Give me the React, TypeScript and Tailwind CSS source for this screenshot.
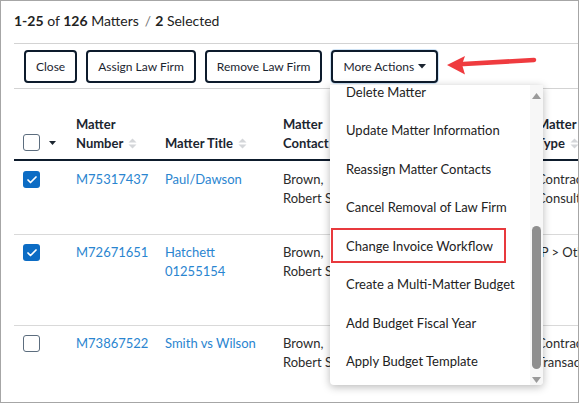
import { Check } from 'lucide-react';

type Matter = {
  number: string;
  title: string[];
  contact: string[];
  status: string;
  type: string[];
  checked: boolean;
  rowClass: string;
};

const matters: Matter[] = [
  {
    number: 'M75317437',
    title: ['Paul/Dawson'],
    contact: ['Brown,', 'Robert Smith'],
    status: 'Open',
    type: ['Contract >', 'Consulting'],
    checked: true,
    rowClass: 'h-[74px] pt-[9px]',
  },
  {
    number: 'M72671651',
    title: ['Hatchett', '01255154'],
    contact: ['Brown,', 'Robert Smith'],
    status: 'Open',
    type: ['IP > Other'],
    checked: true,
    rowClass: 'h-[91px] pt-[8px]',
  },
  {
    number: 'M73867522',
    title: ['Smith vs Wilson'],
    contact: ['Brown,', 'Robert Smith'],
    status: 'Open',
    type: ['Contract >', 'Transaction'],
    checked: false,
    rowClass: 'h-[80px] pt-[8px]',
  },
];

const moreActions = [
  'Delete Matter',
  'Update Matter Information',
  'Reassign Matter Contacts',
  'Cancel Removal of Law Firm',
  'Change Invoice Workflow',
  'Create a Multi-Matter Budget',
  'Add Budget Fiscal Year',
  'Apply Budget Template',
];

const toolbarButtons = ['Close', 'Assign Law Firm', 'Remove Law Firm'];

function SortIcon() {
  return (
    <svg width="9" height="11" viewBox="0 0 9 11" className="ml-[5px] inline-block align-[-1px]">
      <path d="M4.5 0.5 L8.5 4.5 H0.5 Z" fill="#d4d6d9" />
      <path d="M4.5 10.5 L8.5 6.5 H0.5 Z" fill="#d4d6d9" />
    </svg>
  );
}

function Checkbox({ checked }: { checked: boolean }) {
  return checked ? (
    <span className="w-[17px] h-[17px] rounded-[3px] bg-[#0c6cc4] flex items-center justify-center">
      <Check size={12} strokeWidth={3.5} color="#ffffff" />
    </span>
  ) : (
    <span className="block w-[17px] h-[17px] rounded-[3px] border-[1.5px] border-[#5c6d7e] bg-white" />
  );
}

export default function App() {
  return (
    <div
      className="relative w-[579px] h-[403px] overflow-hidden bg-white border border-[#a6a6a6] text-[#222222]"
      style={{ fontFamily: 'Lato, "Noto Sans", sans-serif' }}
    >
      <div className="pl-[13px]">
        {/* summary */}
        <div className="h-[43px] pt-[10px] leading-[20px] text-[14px] border-b border-[#d3d3d3]">
          <span className="font-bold">1-25</span> of <span className="font-bold">126</span> Matters
          <span className="text-[#777777] ml-[6px] mr-[4px]">/</span>
          <span className="font-bold">2</span> Selected
        </div>

        {/* bulk action toolbar */}
        <div className="flex gap-[9px] pl-[10px] pt-[6px] pb-[5px] border-b border-[#d3d3d3]">
          {toolbarButtons.map((label) => (
            <button
              key={label}
              className="h-[33px] px-[10px] border-2 border-[#0d1b2c] rounded-[4px] text-[12px] text-[#1b2530] bg-white"
            >
              {label}
            </button>
          ))}
          <button className="h-[33px] px-[10px] border-2 border-[#0d1b2c] rounded-[4px] text-[12px] text-[#1b2530] bg-white flex items-center gap-[4px] shadow-[0_0_0_1px_#cfe3f5]">
            More Actions
            <svg width="8" height="5" viewBox="0 0 8 5">
              <path d="M0 0 H8 L4 4.5 Z" fill="#1b2530" />
            </svg>
          </button>
        </div>

        {/* matters table */}
        <div className="w-[760px] text-[13px] leading-[19px]">
          <div className="grid grid-cols-[62px_89px_118px_110px_144px_1fr] items-end h-[72px] pb-[6px] border-b-2 border-[#0d1b2c] font-bold text-[#1b2530]">
            <div className="flex items-center gap-[9px] pl-[9px] mb-[2px]">
              <Checkbox checked={false} />
              <svg width="7" height="4" viewBox="0 0 7 4">
                <path d="M0 0 H7 L3.5 4 Z" fill="#1b2530" />
              </svg>
            </div>
            <div>
              Matter
              <br />
              Number
              <SortIcon />
            </div>
            <div>
              Matter Title
              <SortIcon />
            </div>
            <div>
              Matter
              <br />
              Contact
              <SortIcon />
            </div>
            <div>
              Matter
              <br />
              Status
              <SortIcon />
            </div>
            <div>
              Matter
              <br />
              Type
              <SortIcon />
            </div>
          </div>

          {matters.map((m) => (
            <div
              key={m.number}
              className={`grid grid-cols-[62px_89px_118px_110px_144px_1fr] items-start border-b border-[#d9d9d9] ${m.rowClass}`}
            >
              <div className="pl-[9px] pt-[1px]">
                <Checkbox checked={m.checked} />
              </div>
              <div className="text-[#2a85d0]">{m.number}</div>
              <div className="text-[#2a85d0]">
                {m.title.map((t) => (
                  <div key={t}>{t}</div>
                ))}
              </div>
              <div className="text-[#2b2b2b]">
                {m.contact.map((c) => (
                  <div key={c}>{c}</div>
                ))}
              </div>
              <div className="text-[#2b2b2b]">{m.status}</div>
              <div className="text-[#2b2b2b]">
                {m.type.map((t) => (
                  <div key={t}>{t}</div>
                ))}
              </div>
            </div>
          ))}
        </div>
      </div>

      {/* More Actions menu, scrolled a little */}
      <div className="absolute left-[329px] top-[84px] w-[213px] h-[300px] bg-white rounded-b-[4px] shadow-[0_2px_9px_rgba(0,0,0,0.28)] flex overflow-hidden">
        <div className="flex-1 overflow-hidden">
          <ul className="-mt-[12px] text-[13px] text-[#222222]">
            {moreActions.map((a) => (
              <li key={a} className="h-[38.5px] flex items-center pl-[16px] whitespace-nowrap">
                {a}
              </li>
            ))}
          </ul>
        </div>
        <div className="w-[13px] bg-[#f7f7f7] flex flex-col items-center pt-[8px]">
          <svg width="9" height="6" viewBox="0 0 9 6">
            <path d="M4.5 0 L9 6 H0 Z" fill="#9a9a9a" />
          </svg>
          <div className="mt-[127px] w-[9px] h-[143px] rounded-[5px] bg-[#8e8e8e]" />
          <svg width="9" height="6" viewBox="0 0 9 6" className="mt-[8px]">
            <path d="M0 0 H9 L4.5 6 Z" fill="#9a9a9a" />
          </svg>
        </div>
      </div>

      {/* callout around the invoice workflow item */}
      <div className="absolute left-[330px] top-[227px] w-[175px] h-[35px] border-2 border-[#e8393d]" />

      {/* callout arrow pointing at More Actions */}
      <svg className="absolute left-[440px] top-[48px]" width="100" height="30" viewBox="0 0 100 30">
        <line x1="18" y1="15.3" x2="93" y2="11" stroke="#ef3b3f" strokeWidth="4.5" strokeLinecap="round" />
        <path d="M6 16 L24 7 L21 15.6 L24 25.5 Z" fill="#ef3b3f" />
      </svg>
    </div>
  );
}
